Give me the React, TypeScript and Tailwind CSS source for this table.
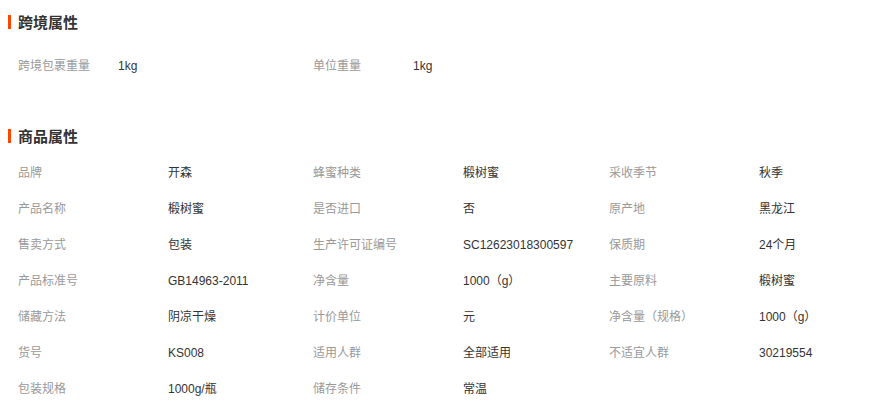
const crossBorder = [
  { label: "跨境包裹重量", value: "1kg" },
  { label: "单位重量", value: "1kg" },
];

const attrs = [
  { label: "品牌", value: "开森" },
  { label: "蜂蜜种类", value: "椴树蜜" },
  { label: "采收季节", value: "秋季" },
  { label: "产品名称", value: "椴树蜜" },
  { label: "是否进口", value: "否" },
  { label: "原产地", value: "黑龙江" },
  { label: "售卖方式", value: "包装" },
  { label: "生产许可证编号", value: "SC12623018300597" },
  { label: "保质期", value: "24个月" },
  { label: "产品标准号", value: "GB14963-2011" },
  { label: "净含量", value: "1000（g）" },
  { label: "主要原料", value: "椴树蜜" },
  { label: "储藏方法", value: "阴凉干燥" },
  { label: "计价单位", value: "元" },
  { label: "净含量（规格）", value: "1000（g）" },
  { label: "货号", value: "KS008" },
  { label: "适用人群", value: "全部适用" },
  { label: "不适宜人群", value: "30219554" },
  { label: "包装规格", value: "1000g/瓶" },
  { label: "储存条件", value: "常温" },
];

function SectionTitle({ title }: { title: string }) {
  return (
    <div className="flex items-center h-[20px]">
      <span className="ml-[8px] w-[3px] h-[14px] bg-[#ff4400]" />
      <h3 className="ml-[7px] text-[15px] font-bold text-[#333] leading-none">{title}</h3>
    </div>
  );
}

function Prop({ label, value, labelWidth }: { label: string; value: string; labelWidth: string }) {
  return (
    <div className="flex items-center h-[36px] text-[12px] whitespace-nowrap">
      <span className={`${labelWidth} text-[#999]`}>{label}</span>
      <span className="text-[#333]">{value}</span>
    </div>
  );
}

export default function App() {
  return (
    <div
      className="w-[876px] h-[413px] overflow-hidden bg-white pt-[12px]"
      style={{ fontFamily: '"Liberation Sans", "Noto Sans CJK SC", sans-serif' }}
    >
      <SectionTitle title="跨境属性" />
      <div className="mt-[16px] ml-[18px] grid grid-cols-[295px_296px_296px]">
        {crossBorder.map((p) => (
          <Prop key={p.label} label={p.label} value={p.value} labelWidth="w-[100px]" />
        ))}
      </div>

      <div className="mt-[42px]">
        <SectionTitle title="商品属性" />
      </div>
      <div className="mt-[9px] ml-[18px] grid grid-cols-[295px_296px_296px]">
        {attrs.map((p) => (
          <Prop key={p.label} label={p.label} value={p.value} labelWidth="w-[150px]" />
        ))}
      </div>
    </div>
  );
}
